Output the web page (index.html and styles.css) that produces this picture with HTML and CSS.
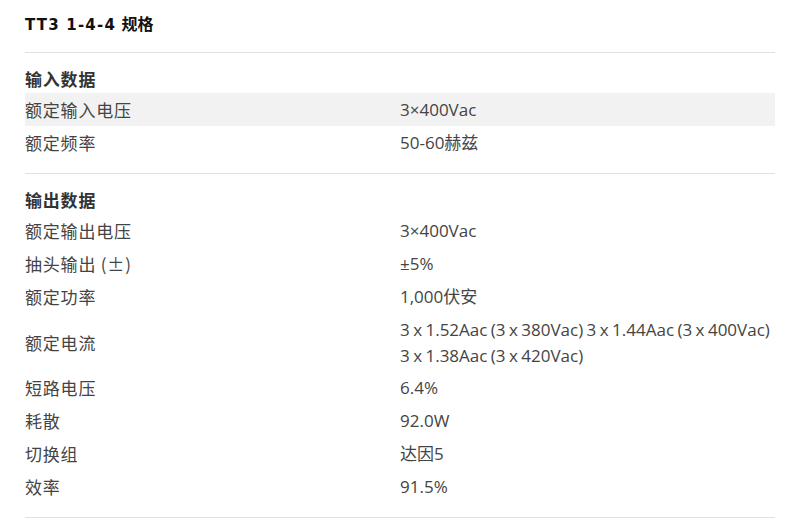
FILE: index.html
```html
<!DOCTYPE html>
<html lang="zh">
<head>
<meta charset="utf-8">
<title>TT3 1-4-4 规格</title>
<link rel="stylesheet" href="styles.css">
</head>
<body>
<div class="spec">
  <h2 class="title"><span class="title-code">TT3 1-4-4</span> 规格</h2>
  <section class="group">
    <h3 class="group-title">输入数据</h3>
    <div class="row shaded"><div class="label">额定输入电压</div><div class="value">3×400Vac</div></div>
    <div class="row"><div class="label">额定频率</div><div class="value">50-60赫兹</div></div>
  </section>
  <section class="group">
    <h3 class="group-title">输出数据</h3>
    <div class="row"><div class="label">额定输出电压</div><div class="value">3×400Vac</div></div>
    <div class="row"><div class="label">抽头输出 (±)</div><div class="value">±5%</div></div>
    <div class="row"><div class="label">额定功率</div><div class="value">1,000伏安</div></div>
    <div class="row tall"><div class="label">额定电流</div><div class="value">3 x 1.52Aac (3 x 380Vac) 3 x 1.44Aac (3 x 400Vac) 3 x 1.38Aac (3 x 420Vac)</div></div>
    <div class="row"><div class="label">短路电压</div><div class="value">6.4%</div></div>
    <div class="row"><div class="label">耗散</div><div class="value">92.0W</div></div>
    <div class="row"><div class="label">切换组</div><div class="value">达因5</div></div>
    <div class="row"><div class="label">效率</div><div class="value">91.5%</div></div>
  </section>
</div>
</body>
</html>
```
FILE: styles.css
```css
html, body {
  margin: 0;
  padding: 0;
  background: #fff;
}
body {
  font-family: "Open Sans", "Noto Sans CJK SC", sans-serif;
  color: #444;
}
.spec {
  margin: 0 18px 0 25px;
  padding-top: 12px;
}
.title {
  margin: 0;
  height: 26px;
  font-size: 16px;
  line-height: 26px;
  font-weight: 700;
  color: #111;
  font-family: "DejaVu Sans", "Noto Sans CJK SC", sans-serif;
  padding-bottom: 14px;
  border-bottom: 1px solid #e0e0e0;
}
.title-code {
  font-size: 15px;
  font-weight: 700;
  letter-spacing: 1.2px;
}
.group {
  padding: 12px 0 14px;
  border-bottom: 1px solid #e0e0e0;
}
.group-title {
  margin: 0;
  font-size: 17px;
  letter-spacing: 0.8px;
  line-height: 28px;
  font-weight: 700;
  color: #333;
  font-family: "Noto Sans CJK SC", sans-serif;
}
.row {
  display: grid;
  grid-template-columns: 375px 1fr;
  box-sizing: border-box;
  height: 33px;
  padding: 4px 0 3px;
  font-size: 17px;
  line-height: 26px;
  align-items: center;
}
.row.tall {
  height: 58px;
}
.row.shaded {
  background: #f2f2f2;
}
.label {
  font-family: "Noto Sans CJK SC", sans-serif;
  letter-spacing: 0.8px;
  color: #444;
}
.value {
  color: #444;
  word-spacing: -1px;
}
```
